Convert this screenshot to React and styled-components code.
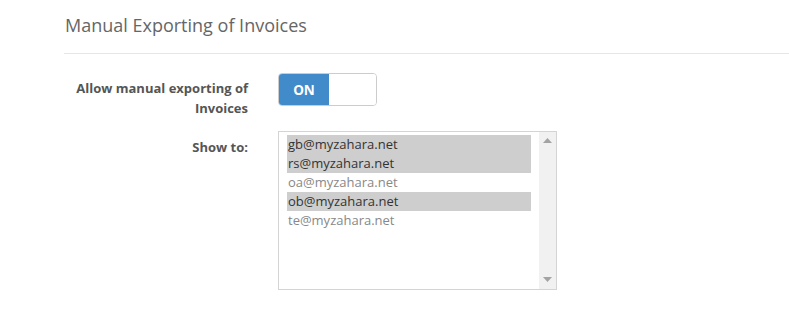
import React from "react";
import styled, { createGlobalStyle } from "styled-components";

const GlobalStyle = createGlobalStyle`
  body {
    margin: 0;
    background: #fff;
    font-family: "Open Sans", "Liberation Sans", sans-serif;
  }
`;

const emails = [
  { address: "gb@myzahara.net", selected: true },
  { address: "rs@myzahara.net", selected: true },
  { address: "oa@myzahara.net", selected: false },
  { address: "ob@myzahara.net", selected: true },
  { address: "te@myzahara.net", selected: false },
];

function App() {
  return (
    <Page>
      <GlobalStyle />
      <Title>Manual Exporting of Invoices</Title>
      <Form>
        <Row>
          <Label>
            Allow manual exporting of
            <br />
            Invoices
          </Label>
          <Toggle>
            <ToggleOn>ON</ToggleOn>
            <ToggleOff />
          </Toggle>
        </Row>
        <Row>
          <Label $offset={6}>Show to:</Label>
          <ListBox>
            <Options>
              {emails.map((e) => (
                <Option key={e.address} $selected={e.selected}>
                  {e.address}
                </Option>
              ))}
            </Options>
            <ScrollBar>
              <Arrow viewBox="0 0 9 5">
                <path d="M0 5 L4.5 0 L9 5 Z" />
              </Arrow>
              <Arrow viewBox="0 0 9 5">
                <path d="M0 0 L4.5 5 L9 0 Z" />
              </Arrow>
            </ScrollBar>
          </ListBox>
        </Row>
      </Form>
    </Page>
  );
}

export default App;

const Page = styled.div`
  padding-left: 64px;
  padding-top: 13px;
`;

const Title = styled.h3`
  margin: 0;
  font-size: 18px;
  line-height: 24px;
  font-weight: 400;
  color: #666;
  padding-left: 1px;
  padding-bottom: 16px;
  border-bottom: 1px solid #e6e6e6;
`;

const Form = styled.div`
  padding-top: 19px;
  display: flex;
  flex-direction: column;
  gap: 13px;
`;

const Row = styled.div`
  display: flex;
  align-items: flex-start;
  gap: 30px;
`;

const Label = styled.div`
  width: 184px;
  text-align: right;
  font-size: 13px;
  line-height: 20px;
  font-weight: 700;
  color: #555;
  padding-top: ${(p) => p.$offset ?? 5}px;
`;

const Toggle = styled.div`
  display: flex;
  width: 97px;
  height: 31px;
  border: 1px solid #ccc;
  border-radius: 4px;
  overflow: hidden;
`;

const ToggleOn = styled.div`
  width: 50px;
  background: #428bca;
  color: #fff;
  font-size: 13.5px;
  font-weight: 700;
  display: flex;
  align-items: center;
  justify-content: center;
`;

const ToggleOff = styled.div`
  flex: 1;
  background: #fff;
`;

const ListBox = styled.div`
  display: flex;
  width: 277px;
  height: 157px;
  border: 1px solid #d4d4d4;
  background: #fff;
`;

const Options = styled.div`
  flex: 1;
  padding: 3px 8px 0 8px;
`;

const Option = styled.div`
  height: 19px;
  line-height: 19px;
  font-size: 13px;
  padding-left: 1px;
  color: ${(p) => (p.$selected ? "#333" : "#888")};
  background: ${(p) => (p.$selected ? "#cecece" : "transparent")};
`;

const ScrollBar = styled.div`
  width: 17px;
  background: #f1f1f1;
  display: flex;
  flex-direction: column;
  justify-content: space-between;
  align-items: center;
  padding: 6px 0 7px;
`;

const Arrow = styled.svg`
  width: 9px;
  height: 5px;
  fill: #a3a3a3;
`;
